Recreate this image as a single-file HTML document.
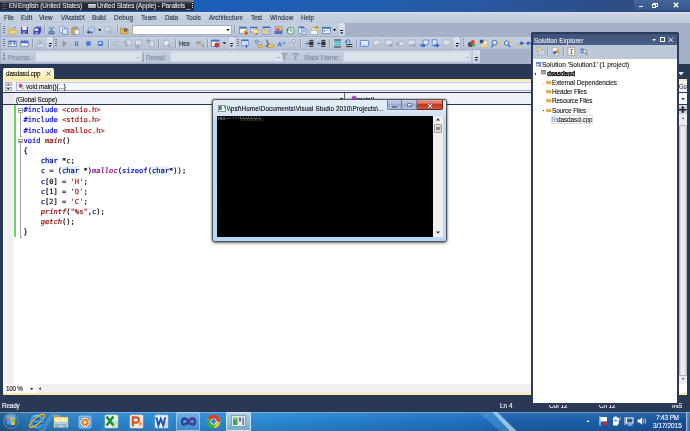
<!DOCTYPE html>
<html><head><meta charset="utf-8"><title>dasdasd - Microsoft Visual Studio</title>
<style>
*{box-sizing:border-box;margin:0;padding:0}
html,body{width:690px;height:431px;overflow:hidden;background:#293955}
body{will-change:transform}
body{position:relative;font-family:"Liberation Sans",sans-serif;font-size:7px;letter-spacing:-.08px;color:#1b2433;line-height:1;-webkit-text-stroke:.1px currentColor}
.a{position:absolute}
.t{position:absolute;white-space:pre;line-height:10px;height:10px;transform:scaleX(.9);transform-origin:0 50%;letter-spacing:-.08px}
#title{left:0;top:0;width:690px;height:11.6px;background:linear-gradient(90deg,#1a5eb8 0,#1c5fb8 35%,#215fb2 52%,#2759a2 68%,#2c4f8a 85%,#2e497c 100%)}
#lang{left:0;top:0;width:194.2px;height:11px;background:linear-gradient(#8a909c 0,#5c6270 16%,#2b2f3b 30%,#20232d 75%,#2c3852 100%)}
#lang .t{color:#f0f0f0;font-size:7.2px;top:.7px;-webkit-text-stroke:.04px}
#wctl{left:633.5px;top:0;width:56.5px;height:10.2px;background:linear-gradient(#46669a,#35568c);border-radius:0 0 0 2px}
#menu{left:0;top:11.6px;width:690px;height:11px;background:linear-gradient(#dae0eb 0,#cbd3e1 18%,#bfc9da 100%)}
#menu .t{top:1.2px;color:#1b2a44}
#tray{left:0;top:22.5px;width:690px;height:41px;background:#a5b1c9}
.tb{position:absolute;background:linear-gradient(#c6d0e0,#b7c2d5);border-radius:1.5px}
.ov{position:absolute;background:linear-gradient(#dde3ee,#c9d1e0);border-radius:0 1.5px 1.5px 0}
.ov:after{content:"";position:absolute;left:50%;bottom:1.8px;margin-left:-1.6px;width:3.2px;height:2px;background:#222;clip-path:polygon(0 0,100% 0,50% 100%)}
.ov:before{content:"";position:absolute;left:50%;bottom:5px;margin-left:-1.5px;width:3px;height:1px;background:#222}
.grip{position:absolute;width:1.5px;height:8px;background:repeating-linear-gradient(#6c7a96 0,#6c7a96 1px,transparent 1px,transparent 2px)}
.sep{position:absolute;width:.8px;height:9px;background:#95a1b8;box-shadow:.8px 0 0 #d3dae6}
.ic{position:absolute;width:9px;height:9px;overflow:visible}
.dd{position:absolute;width:3.4px;height:2.1px;background:#1b1b1b;clip-path:polygon(0 0,100% 0,50% 100%)}
.du{position:absolute;width:3.4px;height:2.1px;background:#333;clip-path:polygon(0 100%,100% 100%,50% 0)}
.dl{position:absolute;width:2.1px;height:3.4px;background:#444;clip-path:polygon(100% 0,100% 100%,0 50%)}
.combo{position:absolute;background:#fff;border:.5px solid #a3aec4}
.dcombo{position:absolute;background:#dce2ec;border:.5px solid #c9d1de;height:10.5px}
.gl{color:#7d889e}
/* doc */
#tab{left:3px;top:67.5px;width:51px;height:12px;background:linear-gradient(#fffcf2,#ffeaa8);border-radius:2px 2px 0 0}
#yl{left:3px;top:79px;width:675px;height:2.4px;background:#ffe8a6}
#va{left:3px;top:81.4px;width:675px;height:10.4px;background:#eef1f7}
#scope{left:3px;top:93.4px;width:675px;height:10.2px;background:#eef1f7}
#ed{left:3px;top:104.5px;width:676px;height:279.5px;background:#fff}
#code{-webkit-text-stroke:.18px currentColor;left:20.5px;top:.8px;font-family:"DejaVu Sans Mono","Liberation Mono",monospace;font-size:7.11px;letter-spacing:0;color:#000;white-space:pre;line-height:10.17px}
.k{color:#0000e0}.s{color:#a31515}.f{color:#880000;font-style:italic}.ty{color:#00008b;background:#e6f3fb}
.m{color:#8a008a;font-style:italic}
.v{color:#000080}
/* panel */
#se{left:531.2px;top:32.2px;width:147.8px;height:372.9px;background:#2b3b5b;border-radius:1.5px 1.5px 0 0}
#seh{left:1.6px;top:1.6px;width:144px;height:11.1px;background:linear-gradient(#3f5379,#4a6088)}
#set{left:1.6px;top:12.7px;width:144px;height:13.7px;background:#bcc7d8}
#sew{left:1.6px;top:26.4px;width:144px;height:344.4px;background:#fff}
#sew .t{font-size:7.2px;letter-spacing:-.1px;color:#111;line-height:9px;height:9px;-webkit-text-stroke:.1px}
/* console */
#con{left:212.4px;top:99px;width:234.4px;height:142.9px;background:linear-gradient(#e6eff9 0,#d3e2f3 11%,#bfd8f2 13%,#b8d8f8 100%);border:.6px solid #4d5660;border-radius:3px;box-shadow:0 1px 3px rgba(0,0,0,.55),0 0 1.5px rgba(0,0,0,.6)}
#conb{left:4px;top:15.5px;width:216px;height:121.4px;background:#000}
#consb{left:220px;top:15.5px;width:9.2px;height:121.4px;background:#f0f0f0}
/* status & taskbar */
#status{left:0;top:395px;width:690px;height:16.7px;background:#293955}
#status .t{color:#fff;top:6.3px}
#task{left:0;top:411.7px;width:690px;height:19.3px;background:linear-gradient(90deg,#1b5890 0,#2672ae 4%,#2a80c4 9%,#2b88d0 22%,#2a8ad2 38%,#2379c8 56%,#1e6ebe 70%,#1b60ac 74%,#1b5da6 88%,#184f92 100%)}
</style></head><body>
<div id="title" class="a"></div>
<div id="lang" class="a">
<div class="a" style="left:2px;top:2px;width:5px;height:7px;background:repeating-linear-gradient(#6a7080 0,#6a7080 1px,transparent 1px,transparent 2px);opacity:.6"></div>
<span class="t" style="left:8.9px;font-size:6.4px">EN</span>
<span class="t" style="left:18px;letter-spacing:-0.10px">English (United States)</span>
<div class="a" style="left:87.5px;top:3.5px;width:8.5px;height:4.5px;background:#aeb2ba;border-radius:1px;border-top:1px solid #e8e8e8"></div>
<span class="t" style="left:96.8px;letter-spacing:-0.13px">United States (Apple) - Parallels _</span>
<div class="a" style="left:191.5px;top:2.5px;width:1px;height:6px;background:repeating-linear-gradient(#ddd 0,#ddd 1px,transparent 1px,transparent 2px)"></div>
</div>
<div id="wctl" class="a">
<div class="a" style="left:5px;top:5.6px;width:4px;height:1.4px;background:#fff"></div>
<div class="a" style="left:19.5px;top:2.5px;width:4.5px;height:4px;border:1px solid #fff;border-top-width:1.4px"></div>
<div class="a" style="left:18.3px;top:3.8px;width:4.5px;height:4px;border:1px solid #fff;border-top-width:1.4px;background:#3e5f93"></div>
<svg class="a" style="left:39.5px;top:2.3px" width="6" height="6" viewBox="0 0 6 6"><path d="M.8.8 5.2 5.2M5.2.8.8 5.2" stroke="#fff" stroke-width="1.4"/></svg>
</div>
<div id="menu" class="a"><span class="t" style="left:3.7px;letter-spacing:-0.04px">File</span><span class="t" style="left:21.2px;letter-spacing:0.10px">Edit</span><span class="t" style="left:39.4px;letter-spacing:0.04px">View</span><span class="t" style="left:60.6px;letter-spacing:-0.08px">VAssistX</span><span class="t" style="left:92.3px;letter-spacing:-0.07px">Build</span><span class="t" style="left:114.2px;letter-spacing:0.14px">Debug</span><span class="t" style="left:141.4px;letter-spacing:0.05px">Team</span><span class="t" style="left:164.6px;letter-spacing:0.02px">Data</span><span class="t" style="left:185.7px;letter-spacing:0.06px">Tools</span><span class="t" style="left:208.7px;letter-spacing:0.03px">Architecture</span><span class="t" style="left:251.3px;letter-spacing:-0.16px">Test</span><span class="t" style="left:270px;letter-spacing:0.18px">Window</span><span class="t" style="left:301.2px;letter-spacing:-0.02px">Help</span></div>
<div id="tray" class="a">
<div class="tb" style="left:1px;top:.5px;width:338px;height:13px"></div>
<div class="ov" style="left:339px;top:.5px;width:5.5px;height:13px"></div>
<div class="tb" style="left:1px;top:14.2px;width:46px;height:12.4px"></div>
<div class="ov" style="left:47px;top:14.2px;width:6px;height:12.4px"></div>
<div class="tb" style="left:53.5px;top:14.2px;width:175px;height:12.4px"></div>
<div class="ov" style="left:228.5px;top:14.2px;width:6px;height:12.4px"></div>
<div class="tb" style="left:235px;top:14.2px;width:219px;height:12.4px"></div>
<div class="ov" style="left:454px;top:14.2px;width:6px;height:12.4px"></div>
<div class="tb" style="left:460.5px;top:14.2px;width:75px;height:12.4px"></div>
<div class="tb" style="left:1px;top:27.4px;width:472px;height:13.2px"></div>
<div class="ov" style="left:473px;top:27.4px;width:6.5px;height:13.2px"></div>
<div class="grip" style="left:3px;top:3px"></div>
<svg class="ic" style="left:8.0px;top:3.0px" viewBox="0 0 9 9"><path d="M.5 2.5h3l.8.8h3v4.7h-6.8z" fill="#e9b84a"/><path d="M1.6 4.3h7l-1.3 3.7h-6.8z" fill="#f7d873" stroke="#b98a1e" stroke-width=".4"/><path d="M5.5 1.8q1.5-1.2 2.6.2" stroke="#2a59b8" stroke-width=".6" fill="none"/></svg>
<svg class="ic" style="left:19.9px;top:3.0px" viewBox="0 0 9 9"><rect x="1" y="1" width="7" height="7" fill="#4748b8"/><rect x="2.3" y="1" width="4.4" height="3" fill="#f4f4fb"/><rect x="2.6" y="5.4" width="3.8" height="2.6" fill="#9a9ad8"/><rect x="5" y="5.8" width="1" height="1.8" fill="#30308a"/></svg>
<svg class="ic" style="left:32.5px;top:3.0px" viewBox="0 0 9 9"><rect x="2.6" y=".6" width="5.8" height="5.8" fill="#5a5bc4"/><rect x="1.6" y="1.6" width="5.8" height="5.8" fill="#4748b8"/><rect x=".6" y="2.6" width="5.8" height="5.8" fill="#3c3db0"/><rect x="1.6" y="2.6" width="3.6" height="2.3" fill="#f4f4fb"/><rect x="2" y="6.3" width="3" height="2" fill="#9a9ad8"/></svg>
<svg class="ic" style="left:47.1px;top:3.0px" viewBox="0 0 9 9"><path d="M2.6.8 5.4 5.6M6.4.8 3.6 5.6" stroke="#3c6fc0" stroke-width=".9"/><circle cx="2.9" cy="6.8" r="1.3" fill="none" stroke="#2a52a0" stroke-width=".9"/><circle cx="6.1" cy="6.8" r="1.3" fill="none" stroke="#2a52a0" stroke-width=".9"/></svg>
<svg class="ic" style="left:59.1px;top:3.0px" viewBox="0 0 9 9"><rect x=".8" y=".8" width="4.6" height="5.4" fill="#eaf1fb" stroke="#5f86c8" stroke-width=".6"/><rect x="3.4" y="2.8" width="4.8" height="5.6" fill="#dbe7f8" stroke="#4a74bd" stroke-width=".6"/></svg>
<svg class="ic" style="left:70.8px;top:3.0px" viewBox="0 0 9 9"><rect x=".8" y="1.4" width="6.2" height="6.8" rx=".6" fill="#e2a73a" stroke="#9c6c17" stroke-width=".5"/><rect x="2.4" y=".6" width="3" height="1.8" fill="#8a8f9c"/><rect x="3.6" y="3.6" width="4.6" height="4.8" fill="#eef3fb" stroke="#5f86c8" stroke-width=".5"/></svg>
<svg class="ic" style="left:85.8px;top:3.0px" viewBox="0 0 9 9"><rect x="3" y="1" width="5.4" height="4" fill="#dfe8f6" stroke="#5b7fc0" stroke-width=".5"/><path d="M6.5 7.3h-3.5v-1.6l-2.4 2.1 2.4 2.1v-1.4h3.5" fill="#2d59b5" transform="translate(0,-1.6)"/><rect x="3.8" y="2" width="3.6" height=".6" fill="#5b7fc0"/></svg>
<svg class="ic" style="left:104.0px;top:3.0px" viewBox="0 0 9 9"><rect x=".8" y="1" width="5.4" height="4" fill="#d4d9e2" stroke="#9ba5b8" stroke-width=".5"/><path d="M2.5 5.2h3.5v-1.4l2.4 2.1-2.4 2.1v-1.4h-3.5" fill="#a9b2c3"/></svg>
<svg class="ic" style="left:120.2px;top:3.0px" viewBox="0 0 9 9"><path d="M.6 2.2h3l.8.8h3.8v5h-7.6z" fill="#e8b440" stroke="#9c6c17" stroke-width=".4"/><circle cx="5.6" cy="4" r="1.8" fill="#3b3b3b"/><circle cx="5.6" cy="4" r=".8" fill="#ddd"/></svg>
<svg class="ic" style="left:238.5px;top:3.0px" viewBox="0 0 9 9"><rect x=".6" y="1" width="7" height="6.4" fill="#f3f7fd" stroke="#4a74bd" stroke-width=".6"/><rect x=".6" y="1" width="7" height="1.6" fill="#3f6dc4"/><rect x="4.6" y="4.6" width="3.8" height="3.8" fill="#e2a73a"/><rect x="6" y="5.8" width="2.6" height="2.8" fill="#d04a3a"/></svg>
<svg class="ic" style="left:249.8px;top:3.0px" viewBox="0 0 9 9"><rect x=".6" y="1" width="6.4" height="5" fill="#f3f7fd" stroke="#4a74bd" stroke-width=".6"/><rect x=".6" y="1" width="6.4" height="1.4" fill="#3f6dc4"/><rect x="3" y="3.6" width="5.4" height="3.6" fill="#f6e39a" stroke="#c39a2b" stroke-width=".5"/><path d="M5 8.6 6.8 7v1.6z" fill="#333"/></svg>
<svg class="ic" style="left:262.3px;top:3.0px" viewBox="0 0 9 9"><rect x="1" y=".8" width="7" height="7.4" fill="#f3f7fd" stroke="#4a74bd" stroke-width=".6"/><rect x="1" y=".8" width="7" height="1.5" fill="#3f6dc4"/><rect x="2.2" y="3.4" width="3.4" height="4" fill="#f2d67a" stroke="#b58e27" stroke-width=".4"/><rect x="6" y="3.6" width="1.4" height="3.6" fill="#9db7e4"/></svg>
<svg class="ic" style="left:274.2px;top:3.0px" viewBox="0 0 9 9"><rect x="1.6" y=".6" width="6.4" height="4.6" fill="#f0cf4a" stroke="#4a74bd" stroke-width=".5"/><rect x=".6" y="5" width="7.8" height="3.2" fill="#4a74bd"/><circle cx="4" cy="3.6" r="1.6" fill="#c43fc0"/><path d="M5.6 5.5 8.2 3v2.5z" fill="#3aa23a"/></svg>
<svg class="ic" style="left:286.0px;top:3.0px" viewBox="0 0 9 9"><circle cx="4.7" cy="4.7" r="3.6" fill="#eef5ee" stroke="#3a9a4a" stroke-width=".9"/><path d="M4.7 2.4v2.5h2" stroke="#2a52a0" stroke-width=".7" fill="none"/><path d="M.2 3.4 2.8 3 2 5.4z" fill="#2a7a3a"/></svg>
<svg class="ic" style="left:297.5px;top:3.0px" viewBox="0 0 9 9"><rect x=".8" y=".8" width="5.2" height="6.4" fill="#f3f7fd" stroke="#4a74bd" stroke-width=".6"/><rect x=".8" y=".8" width="5.2" height="1.4" fill="#3f6dc4"/><rect x="3.2" y="2.8" width="5" height="5.6" fill="#dfe7f5" stroke="#5f7bb0" stroke-width=".6"/><rect x="4.2" y="4" width="3" height=".7" fill="#5f7bb0"/><rect x="4.2" y="5.6" width="3" height=".7" fill="#5f7bb0"/></svg>
<svg class="ic" style="left:309.5px;top:3.0px" viewBox="0 0 9 9"><rect x="1.8" y="1.8" width="6.4" height="2.6" fill="#f6e39a" stroke="#b58e27" stroke-width=".4"/><rect x=".8" y="4.2" width="6.4" height="4" fill="#fff" stroke="#8a8f9c" stroke-width=".5"/><path d="M4 1.6 7.6.4 8.6 2 5 3z" fill="#d7a32a"/><rect x="5.8" y=".6" width="2" height="1.4" fill="#3a9a4a"/></svg>
<svg class="ic" style="left:321.5px;top:3.0px" viewBox="0 0 9 9"><rect x=".6" y="1.2" width="7.8" height="6.4" fill="#fff" stroke="#4a74bd" stroke-width=".7"/><rect x=".6" y="1.2" width="7.8" height="1.6" fill="#3f6dc4"/><rect x="1.6" y="4" width="1.6" height="1.6" fill="#4a74bd"/><rect x="4" y="4.4" width="3.4" height=".8" fill="#8aa2cf"/></svg>
<div class="sep" style="left:44.2px;top:2.5px"></div>
<div class="sep" style="left:82.8px;top:2.5px"></div>
<div class="sep" style="left:116.5px;top:2.5px"></div>
<div class="sep" style="left:234.3px;top:2.5px"></div>
<div class="dd" style="left:98.1px;top:6.6px;background:#1b1b1b"></div>
<div class="dd" style="left:332.9px;top:6.6px;background:#1b1b1b"></div>
<div class="combo" style="left:132.2px;top:2.2px;width:100px;height:10.4px"></div>
<div class="dd" style="left:226.3px;top:6.6px;background:#1b1b1b"></div>
<div class="grip" style="left:3px;top:16.4px"></div>
<div class="grip" style="left:55.2px;top:16.4px"></div>
<div class="grip" style="left:237px;top:16.4px"></div>
<div class="grip" style="left:462.6px;top:16.4px"></div>
<svg class="ic" style="left:8.0px;top:16.1px" viewBox="0 0 9 9"><rect x=".8" y="2" width="7.400" height="5.600" fill="#eef2fa" stroke="#5a6c96" stroke-width=".7"/><rect x=".8" y="2" width="7.400" height="1.200" fill="#4a74c8"/><path d="M2.600 2.600v2.800M1.600 4.400l1 1.200 1-1.200M6.400 2.600v2.800M5.400 4.400l1 1.200 1-1.200" stroke="#2f5fc0" stroke-width=".8" fill="none"/></svg>
<svg class="ic" style="left:19.9px;top:16.1px" viewBox="0 0 9 9"><rect x=".8" y="2.600" width="7.400" height="5" fill="#eef2fa" stroke="#5a6c96" stroke-width=".7"/><rect x=".8" y="2.600" width="7.400" height="1.600" fill="#4a74c8"/><path d="M2.200 1v2.800M4.500 1v2.800M6.800 1v2.800" stroke="#2f5fc0" stroke-width=".9"/></svg>
<svg class="ic" style="left:35.5px;top:16.1px" viewBox="0 0 9 9"><path d="M2.4.8 6 5M6.6.8 3 5" stroke="#9aa3b5" stroke-width=".8"/><rect x=".8" y="5" width="7.4" height="3" fill="#d8dde6" stroke="#9aa3b5" stroke-width=".6"/></svg>
<svg class="ic" style="left:60.3px;top:16.1px" viewBox="0 0 9 9"><path d="M2.6 1.2v6.6l4.4-3.3z" fill="#8e98ab"/></svg>
<svg class="ic" style="left:72.3px;top:16.1px" viewBox="0 0 9 9"><rect x="2.900" y="2.200" width="1.300" height="4.800" fill="#4480e6"/><rect x="4.900" y="2.200" width="1.300" height="4.800" fill="#4480e6"/></svg>
<svg class="ic" style="left:84.0px;top:16.1px" viewBox="0 0 9 9"><rect x="2.600" y="2.600" width="3.800" height="3.800" rx=".4" fill="#4480e6" stroke="#2f5cc0" stroke-width=".4"/></svg>
<svg class="ic" style="left:96.0px;top:16.1px" viewBox="0 0 9 9"><rect x="2.300" y="2.300" width="4.400" height="4.400" rx=".4" fill="#4480e6" stroke="#2f5cc0" stroke-width=".4"/><rect x="3.200" y="3.200" width="2.200" height="1.800" fill="#e8f0ff"/></svg>
<svg class="ic" style="left:111.5px;top:16.1px" viewBox="0 0 9 9"><path d="M1.400 3.500h3V2l3 2.500-3 2.500V5.500h-3z" fill="#d2d8e3" stroke="#97a0b3" stroke-width=".6"/></svg>
<svg class="ic" style="left:122.7px;top:16.1px" viewBox="0 0 9 9"><rect x="2.8" y="1" width="5.4" height="5" fill="#d9dee7" stroke="#97a0b3" stroke-width=".6"/><path d="M.6 3h3v4M2.4 5.8l1.2 1.4 1.2-1.4" stroke="#8690a4" stroke-width=".7" fill="none"/></svg>
<svg class="ic" style="left:133.9px;top:16.1px" viewBox="0 0 9 9"><rect x="1.4" y="1" width="5.8" height="5" fill="#d9dee7" stroke="#97a0b3" stroke-width=".6"/><path d="M.6 7.6h4.5M3.6 6.3l1.6 1.3-1.6 1.3" stroke="#8690a4" stroke-width=".7" fill="none"/></svg>
<svg class="ic" style="left:145.9px;top:16.1px" viewBox="0 0 9 9"><rect x="2.8" y="2" width="5.4" height="5" fill="#d9dee7" stroke="#97a0b3" stroke-width=".6"/><path d="M3.6 5V1.4H.8M2 .2.6 1.4 2 2.6" stroke="#8690a4" stroke-width=".7" fill="none"/></svg>
<svg class="ic" style="left:162.1px;top:16.1px" viewBox="0 0 9 9"><circle cx="4.2" cy="4" r="3" fill="#e4e8ef" stroke="#9aa3b5" stroke-width=".8"/><path d="M6.4 6.2 8.4 8.4" stroke="#8a93a7" stroke-width="1.1"/></svg>
<svg class="ic" style="left:196.2px;top:16.1px" viewBox="0 0 9 9"><path d="M.8 2.6h4.5l2.4 2.6-1.2 1.2-2-1.6h-3.7z" fill="#e9d7c0" stroke="#6f7891" stroke-width=".5"/><path d="M1 3.4h3.6" stroke="#c43a2a" stroke-width=".6"/><path d="M5.5 5.4 8 8" stroke="#6a6a6a" stroke-width=".9"/></svg>
<svg class="ic" style="left:211.1px;top:16.1px" viewBox="0 0 9 9"><rect x=".6" y="1" width="7.4" height="6.4" fill="#f7f9fd" stroke="#4a74bd" stroke-width=".7"/><rect x=".6" y="1" width="7.4" height="1.6" fill="#3f6dc4"/><circle cx="5.8" cy="6" r="2.2" fill="#d8382a" stroke="#8a1a12" stroke-width=".4"/></svg>
<svg class="ic" style="left:241.1px;top:16.1px" viewBox="0 0 9 9"><rect x=".8" y=".8" width="6.4" height="6" fill="#f3f7fd" stroke="#4a74bd" stroke-width=".6"/><rect x=".8" y=".8" width="6.4" height="1.4" fill="#3f6dc4"/><rect x="1.8" y="3" width="3.6" height="2.8" fill="#c9d7ef"/><path d="M5.4 5v3.4M4 7.2l1.4 1.4 1.4-1.4" stroke="#2f5fc0" stroke-width=".8" fill="none"/></svg>
<svg class="ic" style="left:253.5px;top:16.1px" viewBox="0 0 9 9"><circle cx="2.6" cy="2.6" r="1.8" fill="#9db7e4" stroke="#4a74bd" stroke-width=".5"/><circle cx="5" cy="4.6" r="1.8" fill="#c9d7ef" stroke="#4a74bd" stroke-width=".5"/><rect x="4.6" y="5.8" width="3.8" height="2.6" fill="#eec84a" stroke="#a67c1a" stroke-width=".4"/></svg>
<svg class="ic" style="left:265.3px;top:16.1px" viewBox="0 0 9 9"><path d="M1.4.6l2 4.6-1 .2 1 1.8" stroke="#222" stroke-width=".8" fill="none"/><rect x="3" y="5.4" width="5.4" height="3" fill="#eec84a" stroke="#a67c1a" stroke-width=".4"/><rect x=".6" y="6.4" width="2.6" height="1.6" fill="#4a74bd"/></svg>
<svg class="ic" style="left:277.2px;top:16.1px" viewBox="0 0 9 9"><path d="M.8 7.4 2.6 3l1.8 4.4M1.5 6h2.2" stroke="#2f5fc0" stroke-width=".8" fill="none"/><path d="M5.2 4.2h2.6M6.8 2.8 8.2 4.2 6.8 5.6" stroke="#2f5fc0" stroke-width=".6" fill="none"/></svg>
<svg class="ic" style="left:288.9px;top:16.1px" viewBox="0 0 9 9"><rect x="3.4" y=".8" width="3" height="2.6" fill="#d4d9e2" stroke="#9aa3b5" stroke-width=".5"/><rect x="1" y="4" width="3" height="4" fill="#d4d9e2" stroke="#9aa3b5" stroke-width=".5"/><rect x="5.4" y="4" width="3" height="4" fill="#d4d9e2" stroke="#9aa3b5" stroke-width=".5"/></svg>
<svg class="ic" style="left:304.7px;top:16.1px" viewBox="0 0 9 9"><path d="M4.4 1.4h4M4.4 3.4h4M4.4 5.4h4M4.4 7.4h4" stroke="#222" stroke-width=".9"/><rect x="4.4" y="2.6" width="4" height="3.6" fill="#333"/><path d="M.4 4.4h3M2.2 2.8 3.8 4.4 2.2 6" stroke="#2f5fc0" stroke-width=".8" fill="none"/></svg>
<svg class="ic" style="left:317.1px;top:16.1px" viewBox="0 0 9 9"><path d="M4.4 1.4h4M4.4 3.4h4M4.4 5.4h4M4.4 7.4h4" stroke="#222" stroke-width=".9"/><rect x="4.4" y="2.6" width="4" height="3.6" fill="#333"/><path d="M.6 4.4h3M2.2 2.8.6 4.4 2.2 6" stroke="#2f5fc0" stroke-width=".8" fill="none"/></svg>
<svg class="ic" style="left:332.5px;top:16.1px" viewBox="0 0 9 9"><path d="M1 1h7M1 8h7" stroke="#222" stroke-width=".9"/><rect x="1.6" y="2.4" width="6.4" height="1.6" fill="#3ec6d8"/><rect x="1.6" y="4.8" width="6.4" height="1.6" fill="#3ec6d8"/></svg>
<svg class="ic" style="left:344.0px;top:16.1px" viewBox="0 0 9 9"><path d="M2 7.6h6.4M2 5.6h6.4" stroke="#222" stroke-width=".9"/><path d="M2 3.2a2 2 0 1 1 3.2 1.2" stroke="#2f5fc0" stroke-width=".9" fill="none"/><path d="M.6 2.2 2 4.2 3.4 2.6z" fill="#2f5fc0"/></svg>
<svg class="ic" style="left:360.1px;top:16.1px" viewBox="0 0 9 9"><rect x=".4" y="1.4" width="8.2" height="6" rx=".8" fill="#cfe2fb" stroke="#3f78d0" stroke-width=".8"/><rect x="1.4" y="2.4" width="6.2" height="2" fill="#eef5ff"/></svg>
<svg class="ic" style="left:372.1px;top:16.1px" viewBox="0 0 9 9"><path d="M1 1h7.2v4.6h-3.6l-2 2v-2h-1.6z" fill="#d9dee7" stroke="#98a1b4" stroke-width=".6"/></svg>
<svg class="ic" style="left:383.9px;top:16.1px" viewBox="0 0 9 9"><path d="M1 1h7.2v4.6h-3.6l-2 2v-2h-1.6z" fill="#d9dee7" stroke="#98a1b4" stroke-width=".6"/><path d="M4.4 6.4h3.6M6.8 5.2 8.2 6.4 6.8 7.6" stroke="#8690a4" stroke-width=".7" fill="none"/></svg>
<svg class="ic" style="left:395.9px;top:16.1px" viewBox="0 0 9 9"><path d="M2.4 2.4h5.8v4h-3l-1.6 1.6v-1.6h-1.2z" fill="#d9dee7" stroke="#98a1b4" stroke-width=".6"/><path d="M.4 5h3M1.6 3.8.4 5 1.6 6.2" stroke="#8690a4" stroke-width=".7" fill="none"/></svg>
<svg class="ic" style="left:407.2px;top:16.1px" viewBox="0 0 9 9"><path d="M1 1h7.2v4.6h-3.6l-2 2v-2h-1.6z" fill="#d9dee7" stroke="#98a1b4" stroke-width=".6"/><path d="M4.4 6.4h3.6M6.8 5.2 8.2 6.4 6.8 7.6" stroke="#8690a4" stroke-width=".7" fill="none"/></svg>
<svg class="ic" style="left:419.7px;top:16.1px" viewBox="0 0 9 9"><path d="M3 1h5.400v4.400h-2.400l-1.600 1.600v-1.600h-1.400z" fill="#dfe9fa" stroke="#3f6dc4" stroke-width=".7"/><path d="M.4 5.400h3V4l2.400 2.400-2.400 2.400V7.400h-3z" fill="#2f66d0"/></svg>
<svg class="ic" style="left:431.0px;top:16.1px" viewBox="0 0 9 9"><rect x="1.200" y=".8" width="4.600" height="5.600" fill="#dfe9fa" stroke="#3f6dc4" stroke-width=".7"/><path d="M3 5.400h3V4l2.600 2.400-2.600 2.400V7.400h-3z" fill="#2f66d0"/></svg>
<svg class="ic" style="left:442.3px;top:16.1px" viewBox="0 0 9 9"><path d="M1 1h7.2v4.6h-3.6l-2 2v-2h-1.6z" fill="#d9dee7" stroke="#98a1b4" stroke-width=".6"/></svg>
<svg class="ic" style="left:467.3px;top:16.1px" viewBox="0 0 9 9"><circle cx="3.4" cy="5.4" r="2.6" fill="#555"/><circle cx="5.8" cy="3" r="2" fill="#e0462c"/><circle cx="6.6" cy="6" r="1.6" fill="#4aa83a"/></svg>
<svg class="ic" style="left:478.5px;top:16.1px" viewBox="0 0 9 9"><rect x="2" y="1.6" width="6.4" height="6.8" fill="#f8e8b8" stroke="#c9a64a" stroke-width=".5"/><circle cx="2.6" cy="2.6" r="2" fill="#2a52a0"/><path d="M3.4 5.6h4M3.4 7h4" stroke="#c9a64a" stroke-width=".5"/></svg>
<svg class="ic" style="left:491.1px;top:16.1px" viewBox="0 0 9 9"><circle cx="3.6" cy="3.6" r="2.4" fill="#dbe9fb" stroke="#2f66c4" stroke-width=".9"/><path d="M2 5.6.6 8.4" stroke="#2f66c4" stroke-width="1.1"/><rect x="6" y=".6" width="2.6" height="2.6" fill="#eec84a"/><rect x="6.6" y="5" width="2" height="2" fill="#eec84a"/></svg>
<svg class="ic" style="left:502.5px;top:16.1px" viewBox="0 0 9 9"><circle cx="3.6" cy="4" r="2.2" fill="#dbe9fb" stroke="#2f66c4" stroke-width=".9"/><path d="M5.2 5.8 7.4 8.2" stroke="#2f66c4" stroke-width="1.1"/><rect x="6" y="1" width="2.4" height="2.4" fill="#eec84a"/></svg>
<svg class="ic" style="left:516.3px;top:16.1px" viewBox="0 0 9 9"><path d="M3.400 4.200 6 2v1.400h2v1.600h-2v1.400z" fill="#2f5fc0"/><rect x="1.200" y="5.200" width="2" height="2" fill="#e8a33a"/></svg>
<svg class="ic" style="left:524.1px;top:16.1px" viewBox="0 0 9 9"><path d="M2 4.200 4.600 2v1.400h2v1.600h-2v1.400z" fill="#2f5fc0"/><path d="M6 4.200l1-1 1 1-1 1z" fill="#2f5fc0"/></svg>
<div class="sep" style="left:32.2px;top:16px"></div>
<div class="sep" style="left:108.3px;top:16px"></div>
<div class="sep" style="left:158.2px;top:16px"></div>
<div class="sep" style="left:174.8px;top:16px"></div>
<div class="sep" style="left:206.8px;top:16px"></div>
<div class="sep" style="left:300.2px;top:16px"></div>
<div class="sep" style="left:328.8px;top:16px"></div>
<div class="sep" style="left:355.8px;top:16px"></div>
<div class="dd" style="left:222.7px;top:19.8px;background:#1b1b1b"></div>
<span class="t" style="left:179px;top:16.5px;color:#1b2433;-webkit-text-stroke:.08px;letter-spacing:-0.26px">Hex</span>
<div class="grip" style="left:3px;top:30.5px"></div>
<span class="t gl" style="left:8.4px;top:30.5px;letter-spacing:-0.30px">Process:</span>
<div class="dcombo" style="left:35px;top:28.9px;width:106.5px"></div>
<div class="dd" style="left:136.0px;top:34px;background:#8e98ab"></div>
<div class="sep" style="left:143.2px;top:30px"></div>
<span class="t gl" style="left:145.3px;top:30.5px;letter-spacing:-0.11px">Thread:</span>
<div class="dcombo" style="left:170px;top:28.9px;width:112.5px"></div>
<div class="dd" style="left:276.8px;top:34px;background:#8e98ab"></div>
<svg class="ic" style="left:280.1px;top:29.9px" viewBox="0 0 9 9"><path d="M1.400 1.400h6.200l-2.500 3v3.400l-1.200-.7v-2.700z" fill="#aab2c2" stroke="#7d879b" stroke-width=".5"/></svg>
<svg class="ic" style="left:291.3px;top:29.9px" viewBox="0 0 9 9"><path d="M1.400 1.400h6.200l-2.500 3v3.400l-1.200-.7v-2.700z" fill="#aab2c2" stroke="#7d879b" stroke-width=".5"/></svg>
<span class="t gl" style="left:303.6px;top:30.5px;letter-spacing:-0.15px">Stack Frame:</span>
<div class="dcombo" style="left:342.8px;top:28.9px;width:128.5px"></div>
<div class="dd" style="left:466.1px;top:34px;background:#8e98ab"></div>
</div>
<div id="tab" class="a"><span class="t" style="left:2.7px;top:1.8px;color:#000;letter-spacing:-0.13px">dasdasd.cpp</span><svg class="a" style="left:42.8px;top:3.6px" width="5" height="5" viewBox="0 0 5 5"><path d="M.5.5 4.5 4.5M4.5.5.5 4.5" stroke="#333" stroke-width=".8"/></svg></div>
<div id="yl" class="a"></div>
<div id="va" class="a">
<div class="a" style="left:1.6px;top:.6px;width:7.4px;height:4.4px;background:#e4e6ea;border:.5px solid #a9aeb8"></div>
<div class="a" style="left:1.6px;top:5.2px;width:7.4px;height:4.4px;background:#e4e6ea;border:.5px solid #a9aeb8"></div>
<div class="du" style="left:3.8px;top:2px;width:3px;height:1.8px"></div>
<div class="dd" style="left:3.8px;top:6.6px;width:3px;height:1.8px;background:#333"></div>
<div class="a" style="left:12.6px;top:.5px;width:662.4px;height:9.5px;background:#f4f6fa;border:.6px solid #a9b3ca;border-right-color:#dde2ec;border-top-color:#c5cddd"></div>
<svg class="a" style="left:14.8px;top:2px" width="8" height="8" viewBox="0 0 8 8"><path d="M1 1.800 2.600.8l1.600 1v2l-1.600 1-1.600-1z" fill="#c04ad0" stroke="#6a1a7a" stroke-width=".4"/><rect x="3.800" y="4.600" width="2" height="1.600" fill="#e8a820"/></svg>
<span class="t" style="left:23px;top:.7px;color:#000;letter-spacing:-0.06px">void main(){...}</span>
</div>
<div id="scope" class="a">
<div class="a" style="left:0;top:0;width:11px;height:10.2px;background:#e6e8ee"></div>
<span class="t" style="left:12.9px;top:1.5px;color:#000;letter-spacing:-0.07px">(Global Scope)</span>
<div class="dd" style="left:336.8px;top:4.6px"></div>
<div class="a" style="left:341.2px;top:0;width:1.1px;height:10.2px;background:#5a6a8c"></div>
<svg class="a" style="left:345.8px;top:.8px" width="9" height="9" viewBox="0 0 9 9"><rect x=".6" y="3.400" width="1.800" height="3.600" fill="#f0e6c0"/><path d="M3.200 3 5.200 1.800l2 1.200v2.200l-2 1.200-2-1.200z" fill="#c24ad4" stroke="#6a1a7a" stroke-width=".45"/></svg>
<span class="t" style="left:354px;top:1.5px;color:#000;letter-spacing:-0.07px">main()</span>
</div>
<div id="ed" class="a">
<div class="a" style="left:1px;top:0;width:8.6px;height:279.5px;background:#f0f0f0"></div>
<div class="a" style="left:11.1px;top:.3px;width:2.2px;height:132.6px;background:#5fd85f"></div>
<div class="a" style="left:15.2px;top:3.9px;width:4.4px;height:4.4px;border:.6px solid #a8a8a8;background:#fff"></div><div class="a" style="left:16.4px;top:5.8px;width:2.2px;height:.7px;background:#777"></div>
<div class="a" style="left:17.1px;top:8.3px;width:.7px;height:23px;background:#a5a5a5"></div><div class="a" style="left:17.1px;top:31.1px;width:2.4px;height:.7px;background:#a5a5a5"></div>
<div class="a" style="left:15.2px;top:34.4px;width:4.4px;height:4.4px;border:.6px solid #a8a8a8;background:#fff"></div><div class="a" style="left:16.4px;top:36.3px;width:2.2px;height:.7px;background:#777"></div>
<div class="a" style="left:17.1px;top:38.8px;width:.7px;height:93.4px;background:#a5a5a5"></div><div class="a" style="left:17.1px;top:132.2px;width:2.4px;height:.7px;background:#a5a5a5"></div>
<div id="code" class="a"><span class="k">#include</span> <span class="s">&lt;conio.h&gt;</span>
<span class="k">#include</span> <span class="s">&lt;stdio.h&gt;</span>
<span class="k">#include</span> <span class="s">&lt;malloc.h&gt;</span>
<span class="k">void</span> <span class="f">main</span>()
{
    <span class="ty">char</span> *<span class="v">c</span>;
    <span class="v">c</span> = (<span class="ty">char</span> *)<span class="m">malloc</span>(<span class="k">sizeof</span>(<span class="ty">char</span>*));
    <span class="v">c</span>[0] = <span class="s">'H'</span>;
    <span class="v">c</span>[1] = <span class="s">'O'</span>;
    <span class="v">c</span>[2] = <span class="s">'C'</span>;
    <span class="f">printf</span>(<span class="s">"%s"</span>,<span class="v">c</span>);
    <span class="f">getch</span>();
}</div>
</div>
<div class="a" style="left:3px;top:384px;width:676px;height:8.8px;background:#f0f0f0"></div>
<div class="a" style="left:4px;top:384px;width:31.5px;height:8.6px;background:#fff"></div>
<span class="t" style="left:5.8px;top:384.1px;color:#000;letter-spacing:-0.30px">100 %</span><div class="dd" style="left:30px;top:388px"></div>
<div class="dl" style="left:38.8px;top:387px"></div>
<div class="a" style="left:3px;top:392.7px;width:684px;height:2.4px;background:#ffe8a6"></div>
<div class="a" style="left:679px;top:81.4px;width:8.2px;height:311.4px;background:#ececec"></div>
<div class="a" style="left:679px;top:79px;width:8.2px;height:2.4px;background:#ffe8a6"></div>
<div class="a" style="left:679px;top:81.4px;width:8.2px;height:10.4px;background:#eef1f7"></div>
<span class="t" style="left:679.4px;top:81.6px;color:#333;font-size:6.5px">Go</span>
<div class="a" style="left:679px;top:91.8px;width:8.2px;height:1.6px;background:#293955"></div>
<div class="a" style="left:679px;top:93.4px;width:8.2px;height:10.2px;background:#f7f8fb"></div><div class="dd" style="left:681.4px;top:98px"></div>
<div class="a" style="left:679px;top:103.6px;width:8.2px;height:1px;background:#293955"></div>
<div class="a" style="left:679px;top:104.8px;width:8.2px;height:9.2px;background:#cdd4df"></div>
<div class="a" style="left:679.4px;top:124.5px;width:7.4px;height:251px;background:linear-gradient(90deg,#d4d4d4,#eeeeee 35%,#e6e6e6 80%,#d8d8d8);border:.5px solid #b4b4b4;border-radius:1px"></div>
<svg class="a" style="left:679.4px;top:106px" width="7.400" height="7.400" viewBox="0 0 7 7"><path d="M3.500 0 5.200 1.800H1.800zM3.500 7 5.200 5.200H1.800z" fill="#1a1a1a"/><rect x="0" y="2.700" width="7" height="1.600" fill="#1a1a1a"/><rect x="2.900" y="1" width="1.200" height="5" fill="#1a1a1a"/></svg>
<div class="du" style="left:681.4px;top:117.4px;background:#555"></div>
<div class="dd" style="left:681.4px;top:377.6px;background:#444"></div>
<div class="a" style="left:679px;top:383.8px;width:8.2px;height:9px;background:#fff"></div>
<svg class="a" style="left:678.4px;top:72.3px" width="6" height="4" viewBox="0 0 6 4"><path d="M0 0h6L3 3.600z" fill="#dfe5f0"/></svg>
<div id="status" class="a">
<span class="t" style="left:2.2px;letter-spacing:-0.14px">Ready</span>
<span class="t" style="left:500px;letter-spacing:0.07px">Ln 4</span>
<span class="t" style="left:549px;letter-spacing:0.05px">Col 12</span>
<span class="t" style="left:599px;letter-spacing:-0.07px">Ch 12</span>
<span class="t" style="left:671.6px;letter-spacing:-0.11px">INS</span>
</div>
<div id="se" class="a"><div id="seh" class="a"><span class="t" style="left:.8px;top:1.9px;color:#fff;-webkit-text-stroke:.06px;letter-spacing:0.09px">Solution Explorer</span>
<div class="dd" style="left:119.2px;top:4.8px;width:4.4px;height:2.6px;background:#fff"></div>
<div class="a" style="left:127.2px;top:3.2px;width:5.4px;height:5.4px;border:.8px solid #fff;border-top-width:1.6px"></div>
<svg class="a" style="left:135.6px;top:3.2px" width="5.6" height="5.6" viewBox="0 0 6 6"><path d="M.6.6 5.400 5.400M5.400.6.6 5.400" stroke="#fff" stroke-width=".9"/></svg>
</div><div id="set" class="a">
<svg class="ic" style="left:3.4px;top:2.4px" viewBox="0 0 9 9"><rect x=".6" y="1" width="5" height="3.600" fill="#e9d9a0" stroke="#a9986a" stroke-width=".5"/><rect x="2.600" y="3.600" width="5.800" height="4.400" fill="#dfe4ee" stroke="#8d97ad" stroke-width=".5"/><path d="M3.400 5.400h4M3.400 6.800h4" stroke="#8d97ad" stroke-width=".4"/></svg>
<div class="sep" style="left:14.6px;top:2.2px"></div>
<svg class="ic" style="left:18.6px;top:2.4px" viewBox="0 0 9 9"><path d="M1.400.6h4l1.600 1.600v6.200h-5.600z" fill="#f4f6fb" stroke="#8d97ad" stroke-width=".5"/><circle cx="6.200" cy="4.400" r="2" fill="#e0a020"/><circle cx="3.600" cy="5.800" r="1.700" fill="#3a6ac8"/></svg>
<div class="sep" style="left:30px;top:2.2px"></div>
<svg class="ic" style="left:34.4px;top:2.4px" viewBox="0 0 9 9"><rect x="1" y=".8" width="6.800" height="7.400" fill="#fff" stroke="#b0905a" stroke-width=".7"/><path d="M3.400 2.400h2.400M4.400 2.400v4M3.400 6.400h2.400" stroke="#2a52c0" stroke-width=".8"/></svg>
<svg class="ic" style="left:46.4px;top:2.4px" viewBox="0 0 9 9"><circle cx="3" cy="2.600" r="1.400" fill="#8aa2cf" stroke="#4a5f90" stroke-width=".4"/><circle cx="5.800" cy="4.400" r="1.800" fill="#dbe9fb" stroke="#4a5f90" stroke-width=".6"/><path d="M1 5.600h3M7 5.800 8.400 8" stroke="#4a5f90" stroke-width=".8"/><circle cx="8" cy="8" r=".8" fill="#e0a020"/></svg>
</div><div id="sew" class="a">
<span class="t" style="left:9.0px;top:1.6px;letter-spacing:0.06px">Solution 'Solution1' (1 project)</span>
<span class="t" style="left:14.0px;top:10.5px;font-weight:bold;letter-spacing:-.25px;-webkit-text-stroke:.3px;color:#000">dsasdasd</span>
<span class="t" style="left:19.0px;top:19.7px;letter-spacing:-0.11px">External Dependencies</span>
<span class="t" style="left:19.0px;top:28.7px;letter-spacing:-0.17px">Header Files</span>
<span class="t" style="left:19.0px;top:37.8px;letter-spacing:-0.23px">Resource Files</span>
<span class="t" style="left:19.0px;top:47.0px;letter-spacing:-0.18px">Source Files</span>
<span class="t" style="left:23.8px;top:56.4px;letter-spacing:-0.13px">dasdasd.cpp</span>
<svg class="a" style="left:3.6px;top:3.2px" width="5" height="5" viewBox="0 0 5 5"><rect x=".3" y=".6" width="4.400" height="3.400" fill="#fff" stroke="#4a74bd" stroke-width=".6"/><rect x=".3" y=".6" width="4.400" height="1.200" fill="#3f6dc4"/><rect x="2.600" y="2.600" width="2" height="1.800" fill="#9a3ac0"/></svg>
<div class="a" style="left:1.8px;top:14.7px;width:1.3px;height:1.3px;background:#333"></div>
<svg class="a" style="left:8.6px;top:11.7px" width="5" height="5" viewBox="0 0 5 5"><rect x=".4" y=".4" width="4" height="3.600" fill="#fff" stroke="#4a5f90" stroke-width=".6"/><rect x=".4" y=".4" width="4" height="1.200" fill="#3f6dc4"/><rect x="1.400" y="2.400" width="1.400" height="1.400" fill="#d8382a"/><rect x="2.800" y="2.400" width="1.200" height="1.400" fill="#3aa23a"/></svg>
<svg class="a" style="left:13.4px;top:21.7px" width="5.400" height="4.400" viewBox="0 0 5.400 4.400"><path d="M.3.900h1.600l.5.500h2.700v2.600h-4.800z" fill="#e8b440" stroke="#b98a1e" stroke-width=".35"/></svg>
<svg class="a" style="left:13.4px;top:30.7px" width="5.400" height="4.400" viewBox="0 0 5.400 4.400"><path d="M.3.900h1.600l.5.500h2.700v2.600h-4.800z" fill="#e8b440" stroke="#b98a1e" stroke-width=".35"/></svg>
<svg class="a" style="left:13.4px;top:39.8px" width="5.400" height="4.400" viewBox="0 0 5.400 4.400"><path d="M.3.900h1.600l.5.500h2.700v2.600h-4.800z" fill="#e8b440" stroke="#b98a1e" stroke-width=".35"/></svg>
<svg class="a" style="left:13.4px;top:49.0px" width="5.400" height="4.400" viewBox="0 0 5.400 4.400"><path d="M.3.900h1.600l.5.500h2.700v2.600h-4.800z" fill="#e8b440" stroke="#b98a1e" stroke-width=".35"/></svg>
<div class="a" style="left:10.6px;top:24.1px;width:1px;height:1px;background:#bbb"></div>
<div class="a" style="left:10.4px;top:51.2px;width:1.3px;height:1.3px;background:#333"></div>
<div class="a" style="left:17.8px;top:56.4px;width:42px;height:9.200px;border:.5px solid #dcdcdc;border-radius:1px"></div>
<svg class="a" style="left:18.8px;top:58.2px" width="5" height="5" viewBox="0 0 5 5"><rect x=".6" y=".4" width="3.600" height="4.200" fill="#eef3fb" stroke="#6f8fcf" stroke-width=".5"/><path d="M1.400 2.600h2M2.400 1.600v2" stroke="#3a6ac8" stroke-width=".5"/></svg>
</div></div>
<div id="con" class="a">
<div class="a" style="left:4.4px;top:5.2px;width:8.2px;height:6.4px;background:#f6f7f9;border:.5px solid #8a96a4;border-radius:.5px"></div>
<div class="a" style="left:5.6px;top:6.4px;width:1.400px;height:4px;background:#3c62b8"></div><div class="a" style="left:7px;top:6.400px;width:1.600px;height:4px;background:#4aa858"></div><div class="a" style="left:10.200px;top:6.200px;width:1.400px;height:1.600px;background:#4aa858"></div>
<span class="t" style="left:14px;top:3.6px;font-size:7px;color:#000;letter-spacing:0.15px">\\psf\Home\Documents\Visual Studio 2010\Projects\...</span>
<div class="a" style="left:174px;top:0;width:14.800px;height:10.400px;background:linear-gradient(#c3d0e3,#a9bbd6 45%,#98aed0 50%,#aec2de);border:.5px solid #6f7f98;border-top:0;border-radius:0 0 0 2.500px"></div>
<div class="a" style="left:188.800px;top:0;width:14.800px;height:10.400px;background:linear-gradient(#c3d0e3,#a9bbd6 45%,#98aed0 50%,#aec2de);border:.5px solid #6f7f98;border-top:0;border-left:0"></div>
<div class="a" style="left:203.600px;top:0;width:26px;height:10.400px;background:linear-gradient(#e9a08d,#d5644a 45%,#c4351c 50%,#d4593a);border:.5px solid #6a2a20;border-top:0;border-left:0;border-radius:0 0 2.500px 0"></div>
<div class="a" style="left:179px;top:6px;width:4.600px;height:1.800px;background:#fff;border:.3px solid #778"></div>
<div class="a" style="left:193.800px;top:3px;width:5px;height:4.400px;background:#fff;border:.3px solid #778;border-radius:.6px"></div><div class="a" style="left:195.300px;top:4.700px;width:2px;height:1.300px;background:#7f9cc9"></div>
<svg class="a" style="left:213.600px;top:2.600px" width="6" height="6" viewBox="0 0 7 7"><path d="M1 1 6 6M6 1 1 6" stroke="#4a1a12" stroke-width="2.200"/><path d="M1 1 6 6M6 1 1 6" stroke="#fff" stroke-width="1.300"/></svg>
<div id="conb" class="a"><span class="t" style="left:.8px;top:.4px;font-family:'DejaVu Sans Mono','Liberation Mono',monospace;font-size:4.5px;letter-spacing:0;line-height:6px;height:6px;color:#a8a8a8;-webkit-text-stroke:0;transform:none">HOC═²²²²½½½½½½½½_</span></div>
<div id="consb" class="a">
<svg class="a" style="left:2.6px;top:2.8px" width="4" height="3" viewBox="0 0 4 3"><path d="M0 2.600 2 .2 4 2.600z" fill="#333"/></svg>
<div class="a" style="left:.8px;top:8.400px;width:7.600px;height:9.600px;background:linear-gradient(90deg,#e8e8e8,#d4d4d4);border:.5px solid #9a9a9a;border-radius:1px"></div>
<div class="a" style="left:2.800px;top:11.400px;width:3.600px;height:3.600px;background:repeating-linear-gradient(#8a8a8a 0,#8a8a8a .6px,transparent .6px,transparent 1.200px)"></div>
<svg class="a" style="left:2.6px;top:115px" width="4" height="3" viewBox="0 0 4 3"><path d="M0 .4 2 2.800 4 .4z" fill="#333"/></svg>
</div>
</div>
<div id="task" class="a">
<div class="a" style="left:0;top:0;width:690px;height:19.300px;background:linear-gradient(rgba(255,255,255,.09),rgba(255,255,255,0) 45%,rgba(0,0,20,.1))"></div>
<div class="a" style="left:0;top:0;width:690px;height:.8px;background:rgba(255,255,255,.28)"></div>
<svg class="a" style="left:0;top:0" width="690" height="19.300" viewBox="0 0 690 19.300"><path d="M492 0 497 0 517 19.300 510 19.300z" fill="#a9d4f0" opacity=".85"/><path d="M478 0 492 0 510 19.300 500 19.300z" fill="#4fa0d8" opacity=".5"/><path d="M52 0 56 0 44 19.300 38 19.300z" fill="#5aa6dc" opacity=".5"/><path d="M112 0 115 0 104 19.300 100 19.300z" fill="#5aa6dc" opacity=".35"/></svg>
<div class="a" style="left:175.600px;top:.6px;width:24.800px;height:18.700px;background:linear-gradient(rgba(255,255,255,.3),rgba(255,255,255,.1));border:.6px solid rgba(200,225,250,.55);border-radius:1.500px"></div>
<div class="a" style="left:226px;top:.6px;width:25px;height:18.700px;background:linear-gradient(rgba(255,255,255,.58),rgba(255,255,255,.36));border:.6px solid rgba(225,238,250,.85);border-radius:1.500px"></div>
<svg class="a" style="left:3px;top:1.600px" width="16" height="16" viewBox="0 0 16 16"><defs><radialGradient id="og" cx=".5" cy=".4" r=".62"><stop offset="0" stop-color="#8fd0f6"/><stop offset=".55" stop-color="#2f7cc0"/><stop offset="1" stop-color="#15396e"/></radialGradient></defs><circle cx="8" cy="8" r="7.300" fill="url(#og)" stroke="#8ab8de" stroke-width=".6"/><path d="M4 4.800q1.800-1 3.500 0v3q-1.700-1-3.500 0z" fill="#f0582a"/><path d="M8.300 4.900q1.800 1 3.600 0v3q-1.800 1-3.600 0z" fill="#86c83a"/><path d="M4 8.500q1.800-1 3.500 0v3q-1.700-1-3.500 0z" fill="#3aa0ea"/><path d="M8.300 8.600q1.800 1 3.600 0v3q-1.800 1-3.600 0z" fill="#f8c62a"/><ellipse cx="8" cy="4" rx="5.200" ry="2.600" fill="#fff" opacity=".22"/></svg>
<svg class="a" style="left:27.500px;top:.6px" width="18" height="18" viewBox="0 0 18 18"><path d="M14.200 12.600A6.100 6.100 0 1 1 15.100 9.300H5.200" fill="none" stroke="#174f95" stroke-width="4.200"/><path d="M14.200 12.600A6.100 6.100 0 1 1 15.100 9.300H5.200" fill="none" stroke="#3a98e8" stroke-width="2.800"/><path d="M5.400 5A6.100 6.100 0 0 1 12.600 4.400" fill="none" stroke="#8ad4ff" stroke-width="1.100" opacity=".9"/><ellipse cx="9" cy="8.800" rx="9.400" ry="3" fill="none" stroke="#c98f14" stroke-width="1.500" transform="rotate(-40 9 8.800)"/><ellipse cx="9" cy="8.800" rx="9.400" ry="3" fill="none" stroke="#f6c33a" stroke-width=".8" transform="rotate(-40 9 8.800)"/><path d="M11.600 7A6.100 6.100 0 0 1 15.100 9.300" fill="none" stroke="#3a98e8" stroke-width="2.800"/></svg>
<svg class="a" style="left:53px;top:2px" width="16" height="15" viewBox="0 0 16 15"><path d="M1 1.500h5l1 1.500h8v10.500h-14z" fill="#ecd078" stroke="#c9a640" stroke-width=".5"/><rect x="1.500" y="3.600" width="13" height="9.400" fill="#f8eeb4"/><rect x="2" y="2" width="1.500" height="1" fill="#e05a3a"/><rect x="4" y="2" width="1.500" height="1" fill="#4aa84a"/><rect x="2.600" y="8.400" width="10.800" height="5.200" fill="#86b8e6" stroke="#5a8ec8" stroke-width=".5"/><rect x="2.600" y="8.400" width="10.800" height="1.600" fill="#b4d4f0"/><rect x="6" y="11.800" width="4" height="1.200" fill="#f4dc70"/></svg>
<svg class="a" style="left:78px;top:3px" width="14" height="14" viewBox="0 0 14 14"><rect x="1" y="1" width="12" height="12" rx="1.500" fill="#6aa8dc" stroke="#cfe4f6" stroke-width=".6"/><circle cx="7" cy="7.300" r="4.200" fill="#f07a1a" stroke="#fff" stroke-width=".9"/><path d="M5.800 5.200v4.200l3.400-2.100z" fill="#fff"/></svg>
<svg class="a" style="left:103.500px;top:2px" width="15" height="15" viewBox="0 0 15 15"><rect x="1" y="1" width="13" height="13" rx="1" fill="#f2f8ee" stroke="#a8d0a0" stroke-width=".6"/><rect x="8.500" y="7.500" width="5" height="6" fill="#dcefd6" stroke="#8cc088" stroke-width=".4"/><path d="M8.500 9.500h5M8.500 11.500h5M11 7.500v6" stroke="#8cc088" stroke-width=".35"/><path d="M2.600 2.600 9.400 11.400M9.400 2.600 2.600 11.400" stroke="#1f8a36" stroke-width="2.500"/></svg>
<svg class="a" style="left:128.500px;top:2px" width="15" height="15" viewBox="0 0 15 15"><rect x="1" y="1" width="13" height="13" rx="1" fill="#fdf4ee" stroke="#f0b8a0" stroke-width=".6"/><path d="M3.800 12.400V3.300h3.400a2.700 2.700 0 0 1 0 5.400H3.800" fill="none" stroke="#e0501f" stroke-width="2.200"/><circle cx="10.800" cy="10.600" r="2.500" fill="#f8c8b0"/><path d="M10.800 10.600V8.100A2.500 2.500 0 0 1 13.300 10.600z" fill="#e8835a"/></svg>
<svg class="a" style="left:154px;top:2px" width="15" height="15" viewBox="0 0 15 15"><rect x="1" y="1" width="13" height="13" rx="1" fill="#f1f5fc" stroke="#a8bce0" stroke-width=".6"/><rect x="9.800" y="7.500" width="3.800" height="6" fill="#d4e0f4"/><path d="M10.400 9h2.600M10.400 10.500h2.600M10.400 12h2.600" stroke="#8aa4d4" stroke-width=".4"/><path d="M2.400 3.200 4.400 11.400 6.800 4.800 9.200 11.400 11.200 3.200" fill="none" stroke="#1f4fb0" stroke-width="1.900"/></svg>
<svg class="a" style="left:179.500px;top:4.500px" width="17" height="11" viewBox="0 0 17 11"><path d="M2 5.500C2 1.500 6 1.500 8.500 5.500S15 9.500 15 5.500 11 1.500 8.500 5.500 2 9.500 2 5.500z" fill="none" stroke="#35287f" stroke-width="2.300"/><path d="M2 5.500C2 1.500 6 1.500 8.500 5.500S2 9.500 2 5.500z" fill="none" stroke="#2a58b0" stroke-width="1.200"/><path d="M8.500 5.500C11 9.500 15 9.500 15 5.500S11 1.500 8.500 5.500" fill="none" stroke="#5b3fb4" stroke-width="1.200"/></svg>
<svg class="a" style="left:206px;top:2px" width="15" height="15" viewBox="0 0 15 15"><circle cx="7.500" cy="7.500" r="6.800" fill="#e8c82a"/><path d="M7.500 7.500 1.600 4.100A6.800 6.800 0 0 1 13.400 4.100z" fill="#dc3a2a"/><path d="M7.500 7.500 1.600 4.100A6.800 6.800 0 0 0 7.500 14.300l3-5.200z" fill="#3aa84a"/><path d="M7.500 7.500h6.600a6.800 6.800 0 0 0-.7-3.400z" fill="#dc3a2a"/><circle cx="7.500" cy="7.500" r="3.100" fill="#fff"/><circle cx="7.500" cy="7.500" r="2.400" fill="#3a7ad8"/></svg>
<svg class="a" style="left:231px;top:3.500px" width="15" height="12" viewBox="0 0 15 12"><rect x=".5" y=".5" width="14" height="11" fill="#e4e9ee" stroke="#7a8794" stroke-width=".7"/><rect x="2" y="2.500" width="4.500" height="7.500" fill="#4aa05a"/><rect x="2" y="2.500" width="4.500" height="2" fill="#8fc89a"/><rect x="8" y="2.500" width="2" height="4" fill="#4a6ec0"/><rect x="11.500" y="2.500" width="1.200" height="7.500" fill="#555"/></svg>
<div class="du" style="left:586.4px;top:8.4px;width:3.2px;height:2px;background:#fff"></div>
<svg class="a" style="left:598.500px;top:4.500px" width="9" height="10" viewBox="0 0 9 10"><path d="M1 .5v9" stroke="#fff" stroke-width="1"/><path d="M1.500 1h6.500v4.500h-6.500z" fill="#fff"/><circle cx="6.800" cy="7.400" r="1.900" fill="#e02a1f"/></svg>
<svg class="a" style="left:611.500px;top:4.500px" width="9" height="10" viewBox="0 0 9 10"><rect x="1" y="1.500" width="5" height="8" fill="#fff"/><rect x="2.400" y=".4" width="2.200" height="1.400" fill="#fff"/><path d="M6.500 2v6M7.800 1.500v3" stroke="#e8e8e8" stroke-width=".9"/><rect x="2" y="4" width="3" height="1" fill="#3a6aa8"/></svg>
<svg class="a" style="left:623.500px;top:4.500px" width="10" height="10" viewBox="0 0 10 10"><rect x="2.500" y="2" width="6.500" height="5" fill="none" stroke="#fff" stroke-width="1"/><path d="M1 1v8M3.500 9h5" stroke="#fff" stroke-width=".9"/></svg>
<svg class="a" style="left:637px;top:4.500px" width="10" height="10" viewBox="0 0 10 10"><path d="M.6 3.600h2l2.600-2.400v7.600l-2.600-2.400h-2z" fill="#fff"/><path d="M6.400 3.200q1.200 1.800 0 3.600M7.800 2q2 3 0 6" stroke="#dfe9f4" stroke-width=".7" fill="none"/></svg>
<span class="t" style="left:656.200px;top:.9px;color:#fff;font-size:7.200px;letter-spacing:-0.22px">7:43 PM</span>
<span class="t" style="left:653.400px;top:9.700px;color:#fff;font-size:7.200px;letter-spacing:0.00px">3/17/2015</span>
<div class="a" style="left:685.600px;top:0;width:4.400px;height:19.300px;background:linear-gradient(90deg,rgba(255,255,255,.35),rgba(255,255,255,.1));border-left:.6px solid rgba(255,255,255,.5)"></div>
</div>
</body></html>
